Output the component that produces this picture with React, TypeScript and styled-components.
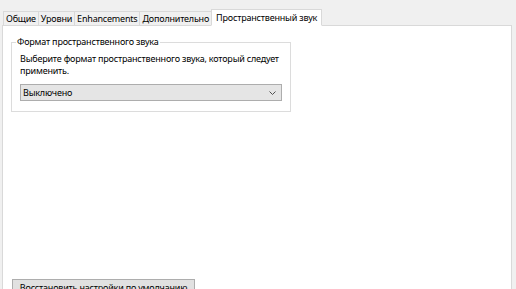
import styled, { createGlobalStyle } from "styled-components";

const GlobalStyle = createGlobalStyle`
  html, body {
    margin: 0;
    padding: 0;
    background: #f0f0f0;
  }
  body {
    font-family: "Noto Sans", "Open Sans", sans-serif;
    font-size: 9px;
    letter-spacing: -0.2px;
    color: #000;
  }
`;

const TABS = [
  "Общие",
  "Уровни",
  "Enhancements",
  "Дополнительно",
  "Пространственный звук",
];

const App = () => {
  return (
    <Window>
      <GlobalStyle />
      <TabStrip>
        {TABS.map((tab, i) => (
          <Tab key={tab} $active={i === TABS.length - 1}>
            {tab}
          </Tab>
        ))}
      </TabStrip>
      <Panel>
        <GroupBox>
          <Legend>Формат пространственного звука</Legend>
          <Hint>
            Выберите формат пространственного звука, который следует
            применить.
          </Hint>
          <Select>
            <span>Выключено</span>
            <svg width="7" height="4" viewBox="0 0 7 4">
              <path d="M0.5 0.5 L3.5 3.5 L6.5 0.5" fill="none" stroke="#505050" strokeWidth="1" />
            </svg>
          </Select>
        </GroupBox>
        <Spacer />
        <ResetButton>Восстановить настройки по умолчанию</ResetButton>
      </Panel>
    </Window>
  );
};

const Window = styled.div`
  width: 516px;
  height: 289px;
  overflow: hidden;
  display: flex;
  flex-direction: column;
  padding: 10px 4px 0 2px;
  box-sizing: border-box;
`;

const TabStrip = styled.div`
  display: flex;
  align-items: flex-end;
  height: 15px;
  padding-left: 2px;
  position: relative;
  z-index: 1;
`;

const Tab = styled.div<{ $active?: boolean }>`
  height: ${(p) => (p.$active ? 15 : 13)}px;
  line-height: ${(p) => (p.$active ? 15 : 13)}px;
  padding: 0 ${(p) => (p.$active ? 4 : 2)}px;
  margin-left: -1px;
  border: 1px solid #d9d9d9;
  border-bottom: ${(p) => (p.$active ? "1px solid #fff" : "none")};
  background: ${(p) => (p.$active ? "#fff" : "#f0f0f0")};
  font-size: 9px;
  white-space: nowrap;
  margin-bottom: ${(p) => (p.$active ? -1 : 0)}px;
`;

const Panel = styled.div`
  flex: 1;
  background: #fff;
  border: 1px solid #d9d9d9;
  border-bottom: none;
  display: flex;
  flex-direction: column;
  padding: 10px 0 0 8px;
`;

const GroupBox = styled.fieldset`
  margin: 0;
  width: 280px;
  box-sizing: border-box;
  border: 1px solid #dcdcdc;
  padding: 5px 8px 10px 8px;
`;

const Legend = styled.legend`
  padding: 0 1px;
  margin-left: -4px;
  font-size: 9px;
  line-height: 12px;
`;

const Hint = styled.div`
  font-size: 9px;
  line-height: 12px;
  margin: 0 0 7px 0;
`;

const Select = styled.div`
  height: 15px;
  border: 1px solid #adadad;
  background: #e5e5e5;
  display: flex;
  align-items: center;
  justify-content: space-between;
  padding: 0 5px 0 2px;
  font-size: 9px;
`;

const Spacer = styled.div`
  flex: 1;
`;

const ResetButton = styled.div`
  width: 183px;
  height: 22px;
  margin-left: 1px;
  box-sizing: border-box;
  border: 1px solid #adadad;
  border-bottom: none;
  background: #e1e1e1;
  font-size: 9px;
  line-height: 15px;
  text-align: center;
  white-space: nowrap;
  overflow: hidden;
  margin-bottom: -12px;
`;

export default App;
